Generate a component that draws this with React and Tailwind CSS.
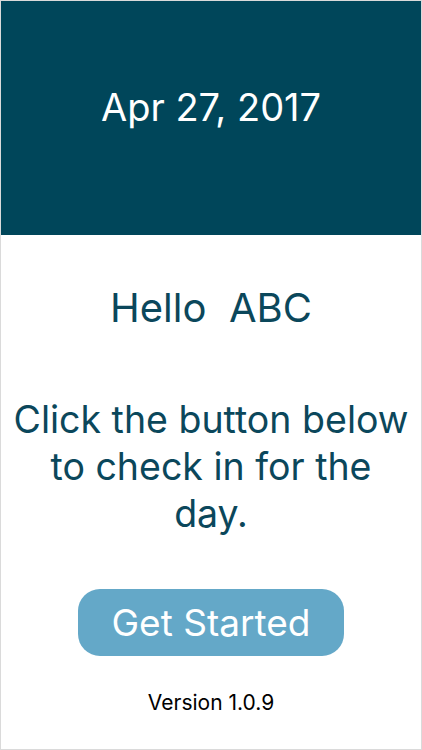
export default function App() {
  return (
    <div
      className="w-[422px] h-[750px] border border-[#dadada] bg-white flex flex-col items-stretch overflow-hidden"
      style={{ fontFamily: "Inter, 'Noto Sans', sans-serif" }}
    >
      <div className="h-[234px] shrink-0 bg-[#00465a] pt-[84px] text-center">
        <div className="text-white text-[38px] leading-[44px]">Apr 27, 2017</div>
      </div>
      <div className="mt-[50px] text-center text-[#0b475b] text-[40px] leading-[46px] whitespace-pre">
        Hello  ABC
      </div>
      <div className="mt-[65px] text-center text-[#0b475b] text-[37.5px] leading-[47px]">
        Click the button below
        <br />
        to check in for the
        <br />
        day.
      </div>
      <button className="mt-[52px] mx-auto w-[266px] h-[67px] rounded-[22px] bg-[#64a8c8] text-white text-[37px] leading-[46px]">
        Get Started
      </button>
      <div className="mt-[35px] text-center text-black text-[21px] leading-[24px]">Version 1.0.9</div>
    </div>
  );
}
